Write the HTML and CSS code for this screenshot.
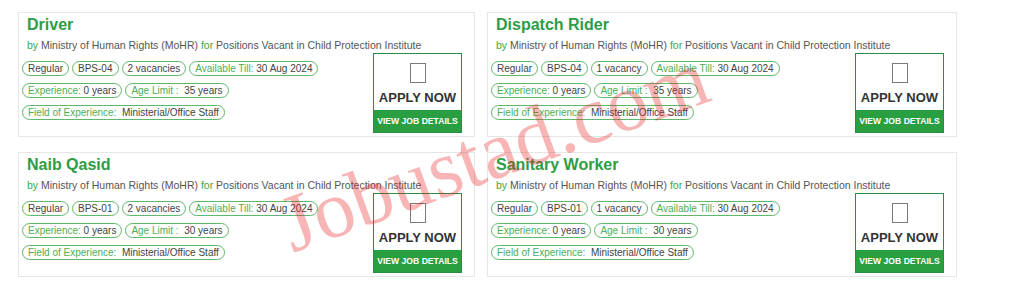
FILE: index.html
```html
<!DOCTYPE html>
<html>
<head>
<meta charset="utf-8">
<link rel="stylesheet" href="styles.css">
</head>
<body>
<div class="page">
  <div class="grid">
    <div class="card">
      <div class="head">
        <h2 class="title">Driver</h2>
        <p class="sub"><span class="g">by</span> Ministry of Human Rights (MoHR) <span class="g">for</span> Positions Vacant in Child Protection Institute</p>
      </div>
      <div class="body">
        <div class="tags">
          <div class="row"><span class="pill">Regular</span><span class="pill">BPS-04</span><span class="pill">2 vacancies</span><span class="pill"><span class="lbl">Available Till:</span> 30 Aug 2024</span></div>
          <div class="row"><span class="pill"><span class="lbl">Experience:</span> 0 years</span><span class="pill"><span class="lbl">Age Limit :</span>&nbsp; 35 years</span></div>
          <div class="row"><span class="pill"><span class="lbl">Field of Experience:</span>&nbsp; Ministerial/Office Staff</span></div>
        </div>
        <div class="apply">
          <div class="apply-top"><span class="box"></span><span class="apply-text">APPLY NOW</span></div>
          <div class="details">VIEW JOB DETAILS</div>
        </div>
      </div>
    </div>
    <div class="card">
      <div class="head">
        <h2 class="title">Dispatch Rider</h2>
        <p class="sub"><span class="g">by</span> Ministry of Human Rights (MoHR) <span class="g">for</span> Positions Vacant in Child Protection Institute</p>
      </div>
      <div class="body">
        <div class="tags">
          <div class="row"><span class="pill">Regular</span><span class="pill">BPS-04</span><span class="pill">1 vacancy</span><span class="pill"><span class="lbl">Available Till:</span> 30 Aug 2024</span></div>
          <div class="row"><span class="pill"><span class="lbl">Experience:</span> 0 years</span><span class="pill"><span class="lbl">Age Limit :</span>&nbsp; 35 years</span></div>
          <div class="row"><span class="pill"><span class="lbl">Field of Experience:</span>&nbsp; Ministerial/Office Staff</span></div>
        </div>
        <div class="apply">
          <div class="apply-top"><span class="box"></span><span class="apply-text">APPLY NOW</span></div>
          <div class="details">VIEW JOB DETAILS</div>
        </div>
      </div>
    </div>
    <div class="card">
      <div class="head">
        <h2 class="title">Naib Qasid</h2>
        <p class="sub"><span class="g">by</span> Ministry of Human Rights (MoHR) <span class="g">for</span> Positions Vacant in Child Protection Institute</p>
      </div>
      <div class="body">
        <div class="tags">
          <div class="row"><span class="pill">Regular</span><span class="pill">BPS-01</span><span class="pill">2 vacancies</span><span class="pill"><span class="lbl">Available Till:</span> 30 Aug 2024</span></div>
          <div class="row"><span class="pill"><span class="lbl">Experience:</span> 0 years</span><span class="pill"><span class="lbl">Age Limit :</span>&nbsp; 30 years</span></div>
          <div class="row"><span class="pill"><span class="lbl">Field of Experience:</span>&nbsp; Ministerial/Office Staff</span></div>
        </div>
        <div class="apply">
          <div class="apply-top"><span class="box"></span><span class="apply-text">APPLY NOW</span></div>
          <div class="details">VIEW JOB DETAILS</div>
        </div>
      </div>
    </div>
    <div class="card">
      <div class="head">
        <h2 class="title">Sanitary Worker</h2>
        <p class="sub"><span class="g">by</span> Ministry of Human Rights (MoHR) <span class="g">for</span> Positions Vacant in Child Protection Institute</p>
      </div>
      <div class="body">
        <div class="tags">
          <div class="row"><span class="pill">Regular</span><span class="pill">BPS-01</span><span class="pill">1 vacancy</span><span class="pill"><span class="lbl">Available Till:</span> 30 Aug 2024</span></div>
          <div class="row"><span class="pill"><span class="lbl">Experience:</span> 0 years</span><span class="pill"><span class="lbl">Age Limit :</span>&nbsp; 30 years</span></div>
          <div class="row"><span class="pill"><span class="lbl">Field of Experience:</span>&nbsp; Ministerial/Office Staff</span></div>
        </div>
        <div class="apply">
          <div class="apply-top"><span class="box"></span><span class="apply-text">APPLY NOW</span></div>
          <div class="details">VIEW JOB DETAILS</div>
        </div>
      </div>
    </div>
  </div>
  <div class="watermark-anchor"><div class="watermark">Jobustad.com</div></div>
</div>
</body>
</html>
```
FILE: styles.css
```css
html, body {
  margin: 0;
  padding: 0;
  background: #ffffff;
}
body {
  font-family: "Liberation Sans", Arial, sans-serif;
}
.page {
  position: relative;
  width: 1024px;
  height: 289px;
  overflow: hidden;
}
.grid {
  display: grid;
  grid-template-columns: 457px 470px;
  column-gap: 12px;
  row-gap: 15px;
  padding: 12px 0 0 18px;
}
.card {
  box-sizing: border-box;
  height: 125px;
  border: 1px solid #e6e6e6;
  padding: 2px 0 0 3px;
  display: flex;
  flex-direction: column;
}
.head {
  padding-left: 5px;
}
.title {
  margin: 0;
  font-size: 16px;
  line-height: 20px;
  font-weight: bold;
  color: #2e9d45;
}
.sub {
  margin: 4px 0 0;
  font-size: 10.5px;
  line-height: 13px;
  color: #555555;
  white-space: nowrap;
}
.sub .g {
  color: #3aa84a;
}
.body {
  display: flex;
  justify-content: space-between;
  align-items: flex-start;
  margin-top: 1px;
  padding-right: 12px;
}
.tags {
  margin-top: 8px;
  display: flex;
  flex-direction: column;
  gap: 7px;
}
.row {
  display: flex;
  gap: 3px;
}
.pill {
  box-sizing: border-box;
  height: 15px;
  line-height: 13px;
  border: 1px solid #5fb86a;
  border-radius: 8px;
  padding: 0 5px;
  font-size: 10px;
  color: #444444;
  white-space: nowrap;
}
.pill .lbl {
  color: #4cae58;
}
.apply {
  box-sizing: border-box;
  width: 89px;
  height: 80px;
  border: 1px solid #2e8b45;
  display: flex;
  flex-direction: column;
  background: #ffffff;
}
.apply-top {
  flex: 1;
  display: flex;
  flex-direction: column;
  align-items: center;
  padding-top: 9px;
}
.box {
  box-sizing: border-box;
  width: 16px;
  height: 20px;
  border: 1px solid #7a7a7a;
}
.apply-text {
  margin-top: 8px;
  font-size: 13px;
  line-height: 14px;
  font-weight: bold;
  color: #333333;
  white-space: nowrap;
}
.details {
  height: 22px;
  line-height: 22px;
  background: #2a9f42;
  color: #ffffff;
  font-size: 8.6px;
  font-weight: bold;
  text-align: center;
  white-space: nowrap;
}
.watermark-anchor {
  position: absolute;
  left: 494px;
  top: 151px;
  width: 0;
  height: 0;
  pointer-events: none;
}
.watermark {
  position: absolute;
  left: 0;
  top: 0;
  transform: translate(-50%, -50%) rotate(-20deg);
  font-family: "Liberation Serif", "Times New Roman", serif;
  font-size: 82px;
  line-height: 1;
  color: rgba(232, 30, 30, 0.33);
  white-space: nowrap;
}
```
